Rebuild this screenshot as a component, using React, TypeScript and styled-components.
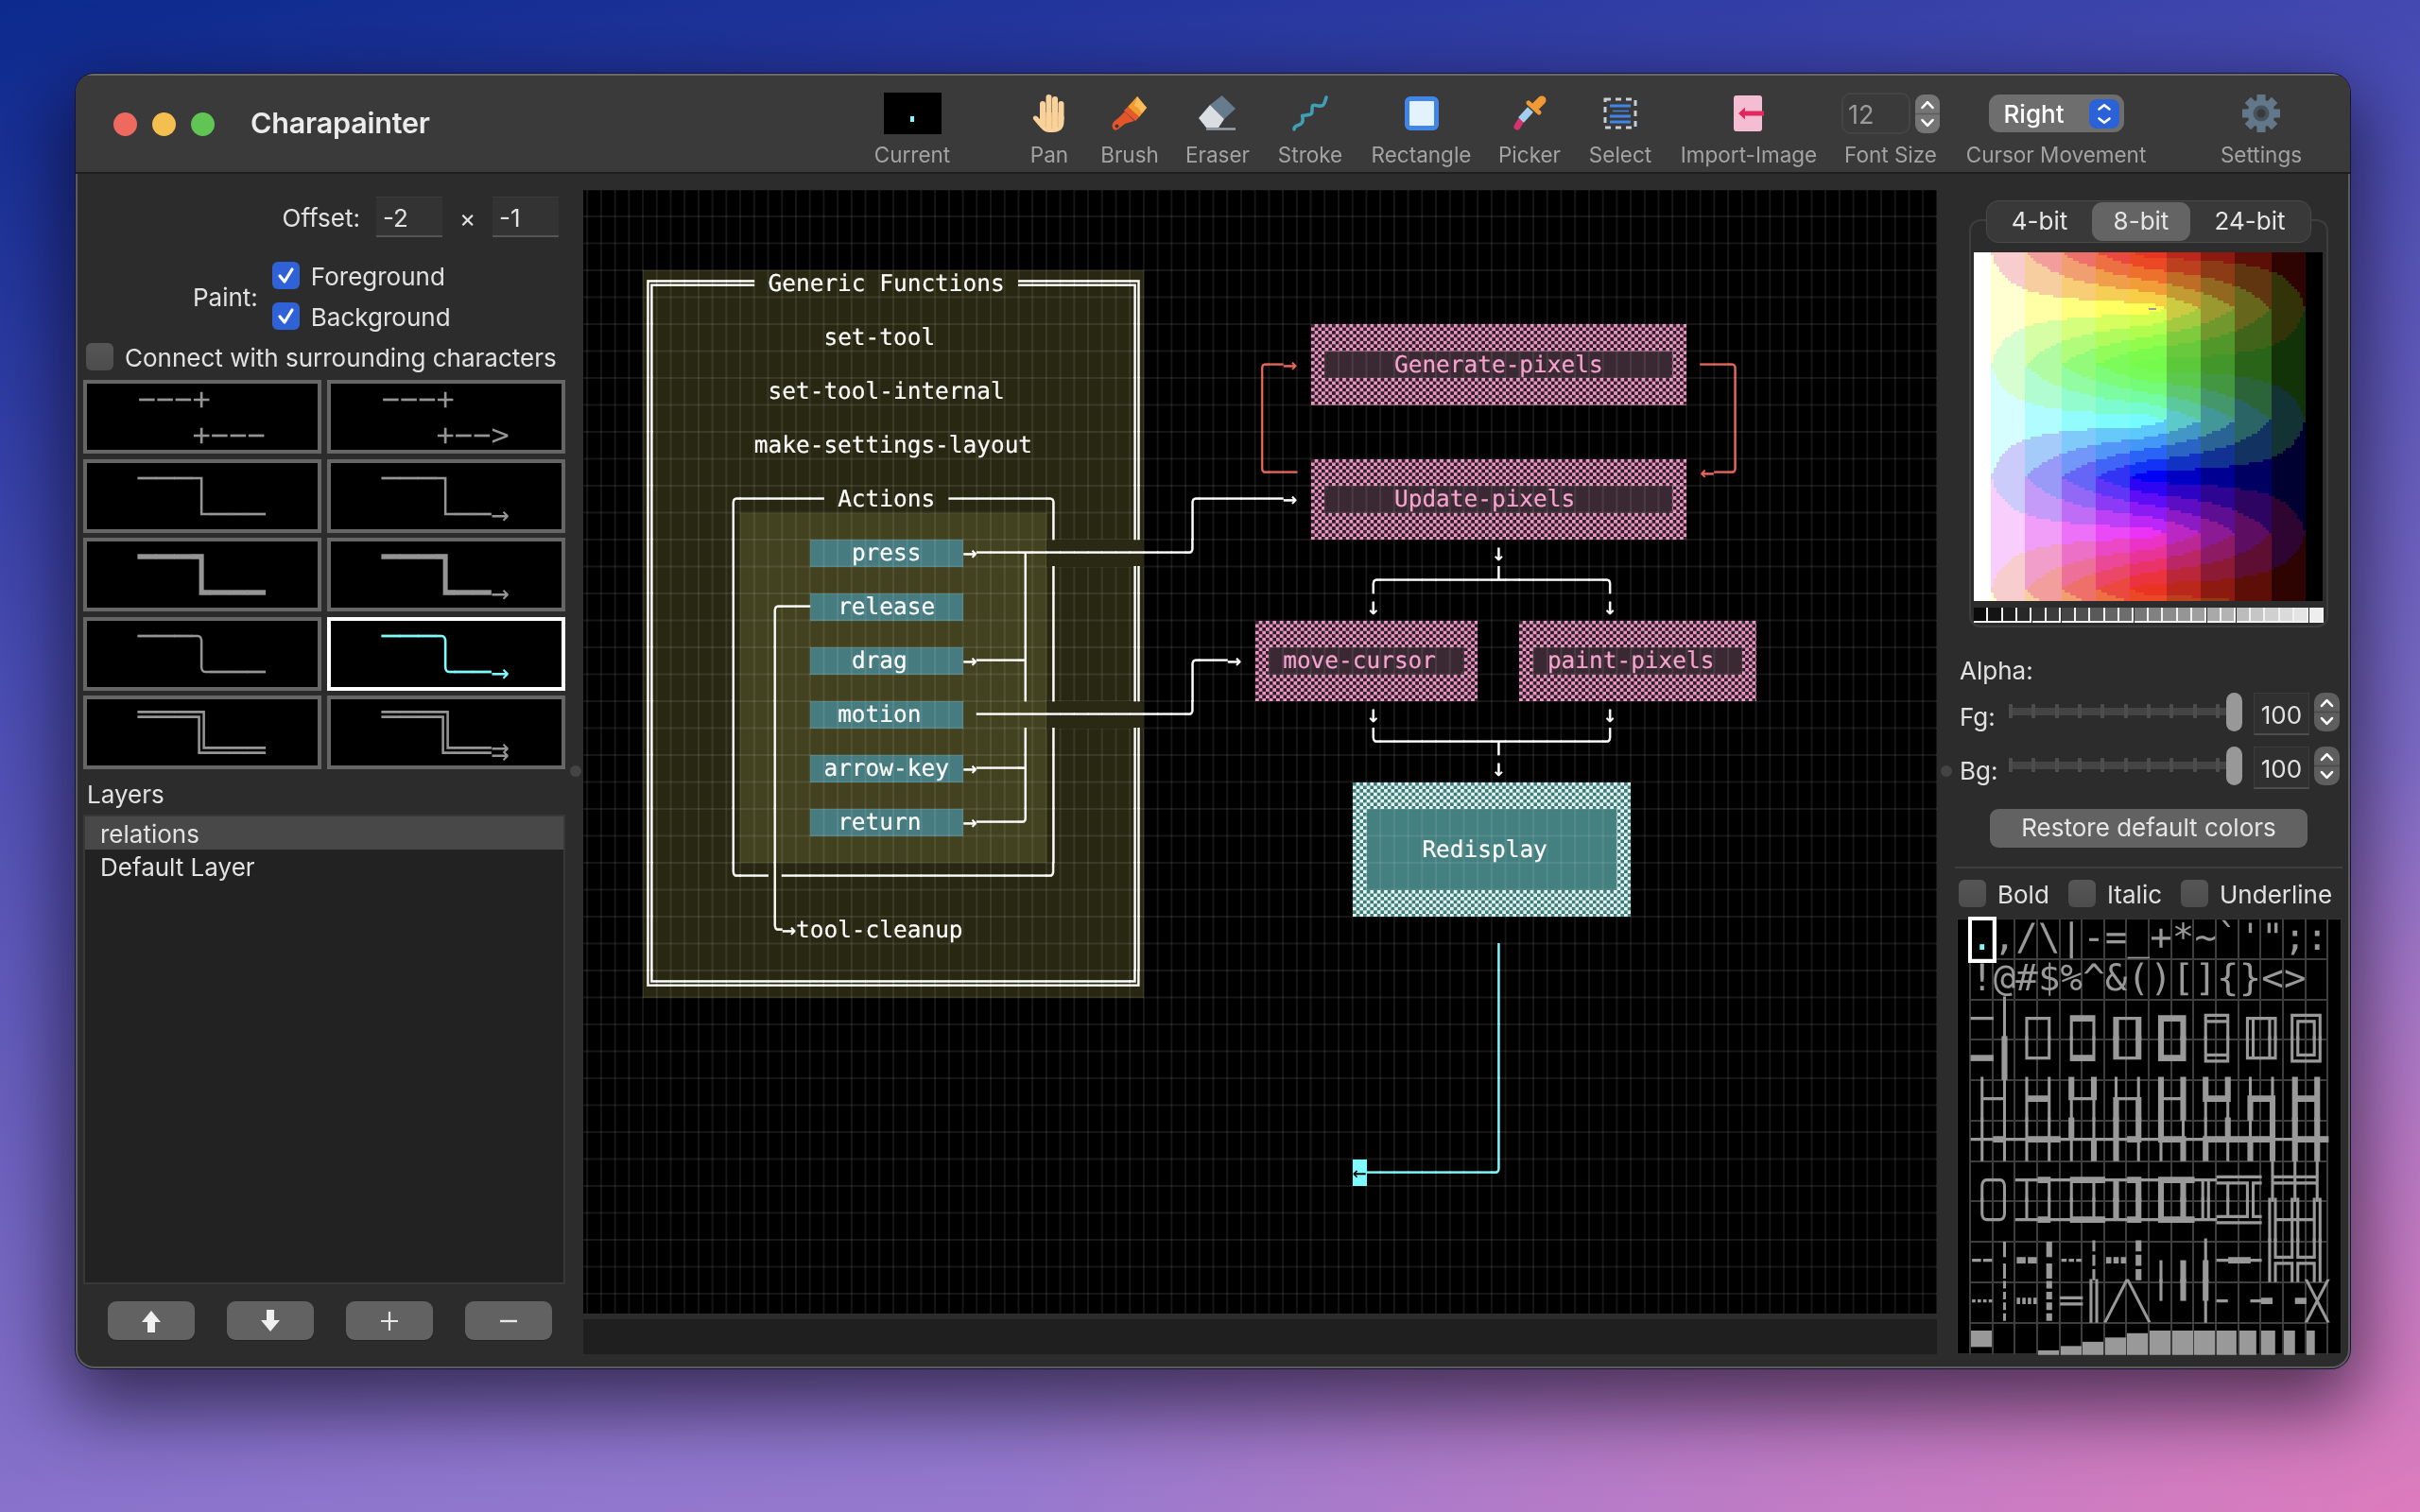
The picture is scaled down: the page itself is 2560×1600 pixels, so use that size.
import React, { useMemo } from "react";
import styled, { createGlobalStyle } from "styled-components";

const CW = 14.72;
const CH = 28.5;
const OX = 4.2;
const OY = -0.5;
const SANS = `"Inter", "Liberation Sans", sans-serif`;
const MONO = `"DejaVu Sans Mono", "Liberation Mono", monospace`;

const Global = createGlobalStyle`
  html, body { margin: 0; padding: 0; }
  body { width: 2560px; height: 1600px; overflow: hidden; font-family: ${SANS}; }
  * { box-sizing: border-box; }
`;

const Desktop = styled.div`
  width: 2560px;
  height: 1600px;
  padding: 78px 0 0 80px;
  background:
    radial-gradient(ellipse 1500px 800px at 100% 100%, #dc7bbd 0%, rgba(220,123,189,0) 100%),
    linear-gradient(166deg, #0c2a8e 0%, #25379f 14%, #4a4db4 32%, #6a60bf 52%, #8f76cd 76%, #a47fd0 100%);
`;

const Window = styled.div`
  width: 2406px;
  height: 1370px;
  display: flex;
  flex-direction: column;
  border-radius: 20px;
  background: #2c2c2c;
  overflow: hidden;
  will-change: transform;
  box-shadow: 0 0 0 1px #15153a, inset 0 0 0 2px #5c5c5c, 0 30px 80px 12px rgba(8, 4, 20, 0.62);
`;

const Header = styled.header`
  height: 106px;
  flex: none;
  display: flex;
  align-items: center;
  background: #3a3a3a;
  border-top: 2px solid #6a6a6a;
  border-bottom: 2px solid #1e1e1e;
  padding-left: 40px;
`;

const Light = styled.span<{ $c: string }>`
  width: 25px;
  height: 25px;
  border-radius: 50%;
  background: ${(p) => p.$c};
  margin-right: 16px;
  flex: none;
`;

const Title = styled.h1`
  margin: 0 0 3px 22px;
  font: 600 30.5px ${SANS};
  color: #ececec;
  letter-spacing: -0.2px;
`;

const Toolbar = styled.div`
  margin-left: auto;
  display: flex;
  gap: 30px;
  padding-right: 50px;
  align-self: flex-start;
  padding-top: 18px;
`;

const ToolItem = styled.div<{ $w: number; $ml?: number }>`
  width: ${(p) => p.$w}px;
  margin-left: ${(p) => p.$ml ?? 0}px;
  display: flex;
  flex-direction: column;
  align-items: center;
`;

const ToolIcon = styled.div`
  height: 44px;
  display: flex;
  align-items: center;
  justify-content: center;
  position: relative;
`;

const ToolLabel = styled.span`
  margin-top: 8px;
  font: 400 22.5px/28px ${SANS};
  color: #a3a3a3;
  white-space: nowrap;
`;

const CurrentSwatch = styled.div`
  width: 61px;
  height: 44px;
  background: #000;
  display: flex;
  align-items: center;
  justify-content: center;
  &::after {
    content: "";
    width: 4px;
    height: 6px;
    background: #7ffbff;
    margin-top: 12px;
  }
`;

const FontBox = styled.div`
  width: 73px;
  height: 44px;
  border: 2px solid #444;
  border-radius: 10px;
  font: 400 27px/43px ${SANS};
  color: #9a9a9a;
  padding-left: 5px;
`;

const FontField = styled.div`
  display: flex;
  align-items: center;
  gap: 5px;
`;

const Stepper = styled.div<{ $h: number; $w: number; $bg: string; $r: number }>`
  width: ${(p) => p.$w}px;
  height: ${(p) => p.$h}px;
  background: ${(p) => p.$bg};
  border-radius: ${(p) => p.$r}px;
  flex: none;
  svg { display: block; }
`;

const Popup = styled.div`
  width: 143px;
  height: 40px;
  border-radius: 11px;
  background: #6e6e6e;
  display: flex;
  align-items: center;
  justify-content: space-between;
  padding: 0 5px 0 16px;
  font: 500 26px ${SANS};
  color: #fff;
`;

const PopupBtn = styled.div`
  width: 32px;
  height: 31px;
  background: #2c62d8;
  border-radius: 8px;
  svg { display: block; }
`;

const Body = styled.div`
  flex: 1;
  display: flex;
  min-height: 0;
`;

/* ---------- left ---------- */
const LeftPanel = styled.aside`
  width: 537px;
  flex: none;
  padding-left: 8px;
  position: relative;
  display: flex;
  flex-direction: column;
`;

const SplitDot = styled.span<{ $left: number }>`
  position: absolute;
  left: ${(p) => p.$left}px;
  top: 626px;
  width: 12px;
  height: 12px;
  border-radius: 50%;
  background: #444;
`;

const BodyText = styled.span`
  font: 400 26px/30px ${SANS};
  padding-top: 3px;
  color: #e2e2e2;
  white-space: nowrap;
`;

const OffsetRow = styled.div`
  margin-top: 24px;
  width: 503px;
  display: flex;
  justify-content: flex-end;
  align-items: center;
  height: 43px;
`;

const NumField = styled.div<{ $w: number; $h: number }>`
  width: ${(p) => p.$w}px;
  height: ${(p) => p.$h}px;
  background: #333;
  border-bottom: 2px solid #555;
  border-top: 1px solid #3c3c3c;
  font: 400 26px/${(p) => p.$h}px ${SANS};
  color: #e2e2e2;
  padding-left: 7px;
  flex: none;
`;

const Times = styled(BodyText)`
  width: 53px;
  text-align: center;
`;

const OffsetLabel = styled(BodyText)`
  margin-right: 17px;
`;

const PaintRow = styled.div`
  margin: 26px 0 0 116px;
  display: flex;
  align-items: center;
  gap: 15px;
  height: 72px;
`;

const Stack = styled.div`
  display: flex;
  flex-direction: column;
  gap: 14px;
`;

const CheckRow = styled.label<{ $ml?: number }>`
  display: flex;
  align-items: center;
  gap: 12px;
  height: 29px;
  margin-left: ${(p) => p.$ml ?? 0}px;
`;

const Box = styled.span<{ $on?: boolean }>`
  width: 29px;
  height: 29px;
  border-radius: 6px;
  flex: none;
  background: ${(p) => (p.$on ? "#2f62d6" : "linear-gradient(#565656, #4c4c4c)")};
  display: flex;
  align-items: center;
  justify-content: center;
`;

const ConnectRow = styled(CheckRow)`
  margin-top: 14px;
`;

const PreviewGrid = styled.div`
  margin-top: 10px;
  display: grid;
  grid-template-columns: 252px 252px;
  grid-auto-rows: 78px;
  column-gap: 6px;
  row-gap: 5.5px;
`;

const Preview = styled.div<{ $sel?: boolean }>`
  background: #000;
  border: 4px solid ${(p) => (p.$sel ? "#fff" : "#666")};
  overflow: hidden;
`;

const PreviewText = styled.pre<{ $sel?: boolean }>`
  margin: -3px 0 0 -4px;
  font: 400 32px/38px ${MONO};
  text-rendering: geometricPrecision;
  color: ${(p) => (p.$sel ? "#7ffbff" : "#959595")};
`;

const LayersTitle = styled(BodyText)`
  margin: 10px 0 0 4px;
  padding-top: 2px;
  line-height: 30px;
`;

const LayerList = styled.div`
  margin-top: 6px;
  width: 510px;
  height: 497px;
  background: #222;
  border: 2px solid #383838;
  flex: none;
`;

const LayerRow = styled.div<{ $sel?: boolean }>`
  height: ${(p) => (p.$sel ? 35 : 34)}px;
  background: ${(p) => (p.$sel ? "#484848" : "transparent")};
  font: 400 26px/37px ${SANS};
  color: #e2e2e2;
  padding-left: 16px;
`;

const LayerButtons = styled.div`
  margin: 18px 0 0 26px;
  display: flex;
  gap: 34.5px;
`;

const SmallBtn = styled.div`
  width: 91.5px;
  height: 41px;
  border-radius: 9px;
  background: #626262;
  display: flex;
  align-items: center;
  justify-content: center;
  box-shadow: 0 1px 0 #222;
  svg { display: block; }
`;

/* ---------- canvas ---------- */
const CanvasCol = styled.main`
  width: 1432px;
  flex: none;
  padding-top: 17px;
  display: flex;
  flex-direction: column;
  gap: 6px;
`;

const Canvas = styled.div`
  height: 1189px;
  background: #000;
  position: relative;
  overflow: hidden;
`;

const ScrollBar = styled.div`
  height: 37px;
  background: #1f1f1f;
`;

type CellProps = { $c: number; $r: number; $w: number; $h: number };

const Cell = styled.div<CellProps>`
  position: absolute;
  left: ${(p) => OX + p.$c * CW}px;
  top: ${(p) => OY + p.$r * CH}px;
  width: ${(p) => p.$w * CW}px;
  height: ${(p) => p.$h * CH}px;
`;

const Fill = styled(Cell)<{ $bg: string }>`
  background: ${(p) => p.$bg};
`;

const Patch = styled(Fill)`
  z-index: 3;
`;

const Dither = styled(Cell)<{ $fg: string; $base: string }>`
  background-color: ${(p) => p.$base};
  background-image: repeating-conic-gradient(${(p) => p.$fg} 0 25%, ${(p) => p.$base} 0 50%);
  background-size: 7.36px 7.125px;
`;

const GridLines = styled.div`
  position: absolute;
  inset: 0;
  z-index: 2;
  background-image:
    linear-gradient(to right, rgba(255,255,255,0.085) 2px, transparent 2px),
    linear-gradient(to bottom, rgba(255,255,255,0.085) 2px, transparent 2px);
  background-size: ${CW}px ${CH}px;
  background-position: ${OX - 1}px ${OY - 1}px;
`;

const NodeLabel = styled.span<{ $c: number; $r: number; $color?: string }>`
  position: absolute;
  z-index: 4;
  left: ${(p) => OX + p.$c * CW}px;
  top: ${(p) => OY + p.$r * CH}px;
  font: 400 24.45px/${CH}px ${MONO};
  text-rendering: geometricPrecision;
  color: ${(p) => p.$color ?? "#fff"};
  white-space: pre;
  -webkit-text-stroke: 0.2px currentColor;
`;

const InkRun = styled(NodeLabel)`
  -webkit-text-stroke: 0.4px currentColor;
`;

const CursorCell = styled(Cell)`
  z-index: 5;
  background: #7ffbff;
  color: #000;
  font: 400 24.45px/${CH}px ${MONO};
  text-rendering: geometricPrecision;
`;

/* ---------- right ---------- */
const RightPanel = styled.aside`
  width: 437px;
  flex: none;
  padding-top: 28px;
  position: relative;
  display: flex;
  flex-direction: column;
`;

const Tabs = styled.div`
  margin-left: 52px;
  width: 344px;
  height: 45px;
  flex: none;
  border: 1.5px solid #4a4a4a;
  border-radius: 13px;
  background: #393939;
  display: flex;
  position: relative;
  z-index: 1;
`;

const Tab = styled.div<{ $w: number; $on?: boolean }>`
  width: ${(p) => p.$w}px;
  margin: 1px 0;
  border-radius: 11px;
  background: ${(p) => (p.$on ? "#646464" : "transparent")};
  font: 400 26px/40px ${SANS};
  color: #e6e6e6;
  text-align: center;
`;

const ColorGroup = styled.div`
  margin: -25px 0 0 34px;
  width: 380px;
  height: 432px;
  flex: none;
  border: 2px solid #3e3e3e;
  border-radius: 12px;
  padding: 33px 3px 0;
`;

const PickerSvg = styled.svg`
  display: block;
  width: 369px;
  height: 369px;
`;

const GrayStrip = styled.div`
  margin-top: 7px;
  display: flex;
  gap: 0.3px;
  height: 15.5px;
`;

const GrayCell = styled.span<{ $v: number }>`
  flex: 1;
  background: ${(p) => `rgb(${p.$v},${p.$v},${p.$v})`};
  border-right: 2px solid #f2f2f2;
  border-bottom: 2px solid #f2f2f2;
`;

const AlphaLabel = styled(BodyText)`
  margin: 31px 0 0 24px;
  padding-top: 0;
`;

const AlphaRow = styled.div<{ $mt: number }>`
  margin: ${(p) => p.$mt}px 0 0 24px;
  display: flex;
  height: 46px;
  flex: none;
`;

const AlphaName = styled(BodyText)`
  width: 52px;
  padding-top: 11px;
`;

const Slider = styled.div`
  width: 247px;
  height: 41px;
  position: relative;
  margin-right: 12px;
  flex: none;
`;

const Track = styled.div`
  position: absolute;
  left: 0;
  right: 12px;
  top: 16px;
  height: 8px;
  background: #444;
  display: flex;
  justify-content: space-between;
  padding-right: 12px;
`;

const Tick = styled.span`
  width: 4px;
  height: 15px;
  margin-top: -4px;
  background: #4d4d4d;
  border-radius: 1px;
`;

const Thumb = styled.span`
  position: absolute;
  right: 0;
  top: 0;
  width: 17px;
  height: 41px;
  border-radius: 9px;
  background: #989898;
`;

const AlphaField = styled(NumField)`
  text-align: center;
  padding: 0;
  background: #303030;
  border: 1px solid #3c3c3c;
  border-bottom: 2px solid #4e4e4e;
  margin-right: 5px;
`;

const RestoreBtn = styled.div`
  margin: 20px 0 0 56px;
  width: 336px;
  height: 41px;
  border-radius: 9px;
  background: #626262;
  font: 400 26px/39px ${SANS};
  color: #e6e6e6;
  text-align: center;
  flex: none;
`;

const Divider = styled.hr`
  margin: 20px 0 0 19px;
  width: 410px;
  height: 2px;
  border: 0;
  background: #3f3f3f;
  flex: none;
`;

const StyleRow = styled.div`
  margin: 12px 0 0 23px;
  display: flex;
  height: 29px;
  flex: none;
`;

const StyleCheck = styled(CheckRow)<{ $w: number }>`
  width: ${(p) => p.$w}px;
`;

const CharSet = styled.div`
  margin: 12px 0 0 21px;
  width: 407px;
  height: 460px;
  flex: none;
  background: #000;
  padding-left: 14px;
  border: 1px solid #333;
  border-bottom: 0;
`;

const CharRow = styled.div<{ $h: number }>`
  display: flex;
  height: ${(p) => p.$h}px;
  width: 378.4px;
  box-shadow: -2px 0 0 #3e3e3e;
`;

const CharCell = styled.span<{ $sel?: boolean; $last?: boolean }>`
  width: 23.65px;
  height: 100%;
  flex: none;
  position: relative;
  border-right: 2px solid #3e3e3e;
  border-bottom: ${(p) => (p.$last ? "0" : "2px solid #3e3e3e")};
  color: ${(p) => (p.$sel ? "#7ffbff" : "#999")};
  ${(p) => (p.$sel ? "outline: 4px solid #fff; outline-offset: -1px; z-index: 2;" : "")}
`;

const CharGlyph = styled.span`
  position: absolute;
  left: 0;
  top: 0;
  font: 400 39px/40px ${MONO};
  text-rendering: geometricPrecision;
  white-space: pre;
`;

const BlockClip = styled.span`
  position: absolute;
  left: 0;
  top: 7px;
  width: 22px;
  height: 26px;
  overflow: hidden;
`;

const BlockGlyph = styled.span<{ $top: boolean }>`
  display: block;
  margin-top: ${(p) => (p.$top ? 0 : -10)}px;
  font: 400 31px/36px ${MONO};
  text-rendering: geometricPrecision;
  white-space: pre;
  transform: scaleX(1.26);
  transform-origin: left center;
`;

/* ---------- data ---------- */
const ROWS = 42;
const COLS = 96;
type Ink = string[][];
const blank = (): Ink => Array.from({ length: ROWS }, () => Array(COLS).fill(" "));
const put = (g: Ink, c: number, r: number, ch: string) => { g[r][c] = ch; };
const hline = (g: Ink, c1: number, c2: number, r: number, ch = "─") => { for (let c = c1; c <= c2; c++) g[r][c] = ch; };
const vline = (g: Ink, c: number, r1: number, r2: number, ch = "│", skip: number[] = []) => {
  for (let r = r1; r <= r2; r++) if (!skip.includes(r)) g[r][c] = ch;
};

type Run = { c: number; r: number; t: string };
const runs = (g: Ink): Run[] => {
  const out: Run[] = [];
  g.forEach((row, r) => {
    const s = row.join("");
    for (const m of s.matchAll(/\S+/g)) out.push({ c: m.index ?? 0, r, t: m[0] });
  });
  return out;
};

const whiteInk = () => {
  const g = blank();
  // double frame
  put(g, 4, 3, "╔"); hline(g, 5, 11, 3, "═"); hline(g, 31, 38, 3, "═"); put(g, 39, 3, "╗");
  vline(g, 4, 4, 28, "║"); vline(g, 39, 4, 28, "║", [13, 19]);
  put(g, 4, 29, "╚"); hline(g, 5, 38, 29, "═"); put(g, 39, 29, "╝");
  // actions frame
  put(g, 10, 11, "╭"); hline(g, 11, 16, 11); hline(g, 26, 32, 11); put(g, 33, 11, "╮");
  vline(g, 10, 12, 24); vline(g, 33, 12, 24, "│", [13, 19]);
  put(g, 10, 25, "╰"); hline(g, 11, 12, 25); hline(g, 14, 32, 25); put(g, 33, 25, "╯");
  // release -> cleanup
  put(g, 13, 15, "╭"); hline(g, 14, 15, 15); vline(g, 13, 16, 26);
  put(g, 13, 27, "╰"); put(g, 14, 27, "→");
  // press
  put(g, 27, 13, "→"); hline(g, 28, 42, 13); put(g, 31, 13, "┬"); put(g, 43, 13, "╯");
  put(g, 43, 12, "│"); put(g, 43, 11, "╭"); hline(g, 44, 49, 11); put(g, 50, 11, "→");
  // action bus
  vline(g, 31, 14, 22, "│", [19]);
  put(g, 27, 17, "→"); hline(g, 28, 30, 17); put(g, 31, 17, "┤");
  put(g, 27, 21, "→"); hline(g, 28, 30, 21); put(g, 31, 21, "┤");
  put(g, 27, 23, "→"); hline(g, 28, 30, 23); put(g, 31, 23, "╯");
  // motion
  hline(g, 28, 42, 19); put(g, 43, 19, "╯"); put(g, 43, 18, "│");
  put(g, 43, 17, "╭"); hline(g, 44, 45, 17); put(g, 46, 17, "→");
  // tree
  put(g, 65, 13, "↓");
  put(g, 56, 14, "╭"); hline(g, 57, 72, 14); put(g, 65, 14, "┴"); put(g, 73, 14, "╮");
  put(g, 56, 15, "↓"); put(g, 73, 15, "↓");
  put(g, 56, 19, "↓"); put(g, 73, 19, "↓");
  put(g, 56, 20, "╰"); hline(g, 57, 72, 20); put(g, 65, 20, "┬"); put(g, 73, 20, "╯");
  put(g, 65, 21, "↓");
  return runs(g);
};

const redInk = () => {
  const g = blank();
  put(g, 48, 6, "╭"); put(g, 49, 6, "─"); put(g, 50, 6, "→");
  vline(g, 48, 7, 9);
  put(g, 48, 10, "╰"); hline(g, 49, 50, 10);
  hline(g, 80, 81, 6); put(g, 82, 6, "╮"); vline(g, 82, 7, 9);
  put(g, 82, 10, "╯"); put(g, 81, 10, "─"); put(g, 80, 10, "←");
  return runs(g);
};

const cyanInk = () => {
  const g = blank();
  vline(g, 65, 28, 35); put(g, 65, 36, "╯"); hline(g, 56, 64, 36);
  return runs(g);
};

const PINK = "#ec93c1";
const PINK_BASE = "#2a1c25";
const PINK_BAND = "#3a2932";

const purple = [
  { c: 52, r: 5, w: 27, label: "Generate-pixels", lc: 58 },
  { c: 52, r: 10, w: 27, label: "Update-pixels", lc: 58 },
  { c: 48, r: 16, w: 16, label: "move-cursor", lc: 50 },
  { c: 67, r: 16, w: 17, label: "paint-pixels", lc: 69 },
];

const teal = [
  { r: 13, label: "press", c: 19 },
  { r: 15, label: "release", c: 18 },
  { r: 17, label: "drag", c: 19 },
  { r: 19, label: "motion", c: 18 },
  { r: 21, label: "arrow-key", c: 17 },
  { r: 23, label: "return", c: 18 },
];

const plainLabels = [
  { c: 13, r: 3, t: "Generic Functions" },
  { c: 17, r: 5, t: "set-tool" },
  { c: 13, r: 7, t: "set-tool-internal" },
  { c: 12, r: 9, t: "make-settings-layout" },
  { c: 18, r: 11, t: "Actions" },
  { c: 15, r: 27, t: "tool-cleanup" },
];

const previews = [
  ["   −−−+\n      +−−−", "   −−−+\n      +−−>"],
  ["   ───┐\n      └───", "   ───┐\n      └──→"],
  ["   ━━━┓\n      ┗━━━", "   ━━━┓\n      ┗━━→"],
  ["   ───╮\n      ╰───", "   ───╮\n      ╰──→"],
  ["   ═══╗\n      ╚═══", "   ═══╗\n      ╚══⇉"],
];

const charset = [
  ".,/\\|-=_+*~`'\";:",
  "!@#$%^&()[]{}<> ",
  "─│┌┐┍┑┎┒┏┓╒╕╓╖╔╗",
  "━┃└┘┕┙┖┚┗┛╘╛╙╜╚╝",
  "├┤┝┥┞┦┟┧┠┨┡┩┢┪┣┫",
  "┼┽┾┿╀╁╂╃╄╅╆╇╈╉╊╋",
  "╭╮┬┭┮┯┰┱┲┳╥╤╦╞╪╡",
  "╰╯┴┵┶┷┸┹┺┻╨╧╩╟╫╢",
  "╌╎╍╏┄┆┅┇╷╻╽╼╾╠╬╣",
  "┈┊┉┋═║╱╲╵╹╿╴╶╸╺╳",
];
const blockRow = "▀  ▁▂▃▄▅▆▇█▉▊▋▌▍";

/* ---------- colour picker ---------- */
const toLin = (v: number) => (v <= 0.04045 ? v / 12.92 : Math.pow((v + 0.055) / 1.055, 2.4));
const toGam = (v: number) => (v <= 0.0031308 ? v * 12.92 : 1.055 * Math.pow(v, 1 / 2.4) - 0.055);

const displayColor = (r: number, g: number, b: number) => {
  const R = toLin(r / 255), G = toLin(g / 255), B = toLin(b / 255);
  const o = [
    0.8225 * R + 0.1774 * G,
    0.0332 * R + 0.9669 * G,
    0.0171 * R + 0.0724 * G + 0.9108 * B,
  ].map((v) => Math.round(toGam(Math.min(1, v)) * 255));
  return `rgb(${o[0]},${o[1]},${o[2]})`;
};

const pickerColor = (hue: number, l: number) => {
  const c = 1 - Math.abs(2 * l - 1);
  const h6 = hue * 6;
  const x = c * (1 - Math.abs((h6 % 2) - 1));
  const m = l - c / 2;
  const tbl = [[c, x, 0], [x, c, 0], [0, c, x], [0, x, c], [x, 0, c], [c, 0, x]];
  const t = tbl[Math.floor(h6) % 6];
  const q = t.map((v) => Math.round(Math.min(1, Math.max(0, v + m)) * 5) * 51);
  return displayColor(q[0], q[1], q[2]);
};

const Picker: React.FC = () => {
  const rects = useMemo(() => {
    const out: { x: number; y: number; h: number; f: string }[] = [];
    const N = 123;
    for (let i = 0; i < N; i++) {
      const l = 1 - (i + 0.5) / N;
      let start = 0;
      let cur = "";
      for (let j = 0; j <= N; j++) {
        const col = j < N ? pickerColor((((j + 0.5) / N) * 1.035) % 1, l) : "";
        if (col !== cur) {
          if (cur) out.push({ x: i * 3, y: start * 3, h: (j - start) * 3, f: cur });
          cur = col;
          start = j;
        }
      }
    }
    return out;
  }, []);
  return (
    <PickerSvg viewBox="0 0 369 369" shapeRendering="crispEdges">
      {rects.map((r, i) => (
        <rect key={i} x={r.x} y={r.y} width={3} height={r.h} fill={r.f} />
      ))}
      <rect x={185} y={59} width={8} height={2} fill="#9a9a9a" />
    </PickerSvg>
  );
};

/* ---------- icons ---------- */
const Chevrons: React.FC<{ w: number; h: number; split?: boolean }> = ({ w, h, split }) => (
  <svg width={w} height={h} viewBox={`0 0 ${w} ${h}`} fill="none" stroke="#fff" strokeWidth={2.6} strokeLinecap="round" strokeLinejoin="round">
    <path d={`M${w / 2 - 5.5} ${h * 0.34} L${w / 2} ${h * 0.2} L${w / 2 + 5.5} ${h * 0.34}`} />
    <path d={`M${w / 2 - 5.5} ${h * 0.66} L${w / 2} ${h * 0.8} L${w / 2 + 5.5} ${h * 0.66}`} />
    {split && <path d={`M0 ${h / 2} H${w}`} stroke="rgba(0,0,0,0.22)" strokeWidth={1.5} />}
  </svg>
);

const Hand = () => (
  <svg width="36" height="42" viewBox="0 0 36 42">
    <g fill="#f8d29b">
      <rect x="8" y="8" width="6" height="24" rx="3" />
      <rect x="14.5" y="1" width="6" height="28" rx="3" />
      <rect x="21" y="3" width="6" height="26" rx="3" />
      <rect x="27.5" y="8" width="6" height="22" rx="3" />
      <path d="M8 24H33.5V30C33.5 37 29 41 22 41H18C12 41 10 37 6 33L1 27C0 24 3 22.5 5 24L8 27Z" />
    </g>
    <path d="M14.3 20V36M20.7 20V37M27.3 20V36" stroke="#eebc7c" strokeWidth="1.2" />
  </svg>
);
const Brush = () => (
  <svg width="38" height="38" viewBox="0 0 38 38">
    <path d="M27 1L37 13L29 23L17 12Z" fill="#f29b2e" />
    <path d="M27 1L37 13L32 19L28 13L24 11Z" fill="#f7bd5a" />
    <path d="M17 12L29 23L25 27L13 16Z" fill="#e85a2c" />
    <path d="M14 17L24 27L14 30L9 34Q5 38 2 36Q-1 32 2 28L8 23Z" fill="#e4552a" />
    <circle cx="5.5" cy="32.5" r="1.9" fill="#3a3a3a" />
  </svg>
);
const Eraser = () => (
  <svg width="40" height="38" viewBox="0 0 40 38">
    <path d="M24.7 0L39 14L27 25L12 10Z" fill="#667b8c" />
    <path d="M12 10L27 25L21 34H8L0 24Z" fill="#dadee1" />
    <path d="M8 35.5H39" stroke="#98a3ac" strokeWidth="2.4" />
  </svg>
);
const Stroke = () => (
  <svg width="38" height="38" viewBox="0 0 38 38" fill="none">
    <path d="M2 36C2 29 10 34 11 27S8 22 14 21S21 21 21 15S22 10 28 11S34 8 36 2" stroke="#3f9fb5" strokeWidth="3.6" strokeLinecap="round" />
  </svg>
);
const RectIcon = () => (
  <svg width="36" height="36" viewBox="0 0 36 36">
    <rect x="2.5" y="2.5" width="31" height="31" rx="3.5" fill="#e3f2fd" stroke="#3f86e8" strokeWidth="5" />
  </svg>
);
const Dropper = () => (
  <svg width="36" height="38" viewBox="0 0 36 38" fill="none" strokeLinecap="round">
    <path d="M5 33L8 28" stroke="#d6336c" strokeWidth="7" />
    <path d="M9 26L19 15" stroke="#a5cdf0" strokeWidth="8" strokeLinecap="butt" />
    <path d="M17 8L28 18" stroke="#f09a37" strokeWidth="5" />
    <path d="M25 11L31 5" stroke="#f09a37" strokeWidth="9" />
  </svg>
);
const SelectIcon = () => (
  <svg width="36" height="34" viewBox="0 0 36 34" fill="none">
    <rect x="2" y="2" width="32" height="30" stroke="#c8ced4" strokeWidth="3" strokeDasharray="6 5" />
    <path d="M7 9H29M7 20H29M7 26H29" stroke="#3f86e8" strokeWidth="2.8" />
    <path d="M10 14.5H27" stroke="#3f86e8" strokeWidth="1.6" />
  </svg>
);
const ImportIcon = () => (
  <svg width="32" height="38" viewBox="0 0 32 38">
    <rect x="0" y="0" width="30" height="38" rx="3" fill="#f4bdd2" />
    <path d="M5 19L12 12.5V16.5H32V21.5H12V25.5Z" fill="#e0295f" />
  </svg>
);
const Gear = () => (
  <svg width="40" height="40" viewBox="-20 -20 40 40">
    {[0, 45, 90, 135, 180, 225, 270, 315].map((a) => (
      <rect key={a} x="-4.5" y="-20" width="9" height="9" transform={`rotate(${a})`} fill="#62788a" />
    ))}
    <circle r="14.5" fill="#62788a" />
    <circle r="8.5" fill="#45535f" />
    <circle r="4.5" fill="#3a3a3a" />
  </svg>
);
const Check = () => (
  <svg width="21" height="21" viewBox="0 0 21 21" fill="none">
    <path d="M4 11L9 17L17 4" stroke="#fff" strokeWidth="3.2" strokeLinecap="round" strokeLinejoin="round" />
  </svg>
);
const ArrowUp = () => (
  <svg width="20" height="24" viewBox="0 0 20 24"><path d="M10 1L20 13H14V24H6V13H0Z" fill="#f0f0f0" /></svg>
);
const ArrowDown = () => (
  <svg width="20" height="24" viewBox="0 0 20 24"><path d="M10 23L20 11H14V0H6V11H0Z" fill="#f0f0f0" /></svg>
);
const Plus = () => (
  <svg width="18" height="20" viewBox="0 0 18 20"><path d="M9 0V20M0 10H18" stroke="#e8e8e8" strokeWidth="2.2" /></svg>
);
const Minus = () => (
  <svg width="18" height="4" viewBox="0 0 18 4"><path d="M0 2H18" stroke="#e8e8e8" strokeWidth="2.4" /></svg>
);

const Lines: React.FC<{ items: Run[]; color: string }> = ({ items, color }) => (
  <>
    {items.map((u) => (
      <InkRun key={`${u.c}-${u.r}`} $c={u.c} $r={u.r} $color={color}>{u.t}</InkRun>
    ))}
  </>
);

const tools: { name: string; w: number; ml?: number; icon: React.ReactNode }[] = [
  { name: "Current", w: 80, icon: <CurrentSwatch /> },
  { name: "Pan", w: 37, ml: 56.5, icon: <Hand /> },
  { name: "Brush", w: 60, ml: 6.5, icon: <Brush /> },
  { name: "Eraser", w: 67, ml: -0.5, icon: <Eraser /> },
  { name: "Stroke", w: 68, ml: 0.5, icon: <Stroke /> },
  { name: "Rectangle", w: 105, ml: 1, icon: <RectIcon /> },
  { name: "Picker", w: 64, icon: <Dropper /> },
  { name: "Select", w: 66, ml: 1, icon: <SelectIcon /> },
  { name: "Import-Image", w: 144, ml: 1, icon: <ImportIcon /> },
  {
    name: "Font Size", w: 98, ml: -1, icon: (
      <FontField>
        <FontBox>12</FontBox>
        <Stepper $w={26} $h={41} $bg="#757575" $r={9}><Chevrons w={26} h={41} split /></Stepper>
      </FontField>
    ),
  },
  {
    name: "Cursor Movement", w: 189, ml: 1.5, icon: (
      <Popup>
        Right
        <PopupBtn><Chevrons w={32} h={31} /></PopupBtn>
      </Popup>
    ),
  },
  { name: "Settings", w: 88, ml: 48.5, icon: <Gear /> },
];

const grays = Array.from({ length: 24 }, (_, i) => Math.round(10 + (i / 23) * 228));

export default function App() {
  const white = useMemo(whiteInk, []);
  const red = useMemo(redInk, []);
  const cyan = useMemo(cyanInk, []);
  return (
    <Desktop>
      <Global />
      <Window>
        <Header>
          <Light $c="#ee6a5e" />
          <Light $c="#f5bf4f" />
          <Light $c="#61c554" />
          <Title>Charapainter</Title>
          <Toolbar>
            {tools.map((t) => (
              <ToolItem key={t.name} $w={t.w} $ml={t.ml}>
                <ToolIcon>{t.icon}</ToolIcon>
                <ToolLabel>{t.name}</ToolLabel>
              </ToolItem>
            ))}
          </Toolbar>
        </Header>
        <Body>
          <LeftPanel>
            <OffsetRow>
              <OffsetLabel>Offset:</OffsetLabel>
              <NumField $w={70} $h={43}>-2</NumField>
              <Times>×</Times>
              <NumField $w={70} $h={43}>-1</NumField>
            </OffsetRow>
            <PaintRow>
              <BodyText>Paint:</BodyText>
              <Stack>
                <CheckRow><Box $on><Check /></Box><BodyText>Foreground</BodyText></CheckRow>
                <CheckRow><Box $on><Check /></Box><BodyText>Background</BodyText></CheckRow>
              </Stack>
            </PaintRow>
            <ConnectRow $ml={3}><Box /><BodyText>Connect with surrounding characters</BodyText></ConnectRow>
            <PreviewGrid>
              {previews.flat().map((p, i) => (
                <Preview key={i} $sel={i === 7}>
                  <PreviewText $sel={i === 7}>{p}</PreviewText>
                </Preview>
              ))}
            </PreviewGrid>
            <LayersTitle>Layers</LayersTitle>
            <LayerList>
              <LayerRow $sel>relations</LayerRow>
              <LayerRow>Default Layer</LayerRow>
            </LayerList>
            <LayerButtons>
              <SmallBtn><ArrowUp /></SmallBtn>
              <SmallBtn><ArrowDown /></SmallBtn>
              <SmallBtn><Plus /></SmallBtn>
              <SmallBtn><Minus /></SmallBtn>
            </LayerButtons>
            <SplitDot $left={523} />
          </LeftPanel>
          <CanvasCol>
            <Canvas>
              <Fill $c={4} $r={3} $w={36} $h={27} $bg="#272712" />
              <Fill $c={11} $r={12} $w={22} $h={13} $bg="#424220" />
              {teal.map((t) => (
                <Fill key={t.r} $c={16} $r={t.r} $w={11} $h={1} $bg="#467c80" />
              ))}
              {purple.map((p) => (
                <React.Fragment key={p.label}>
                  <Dither $c={p.c} $r={p.r} $w={p.w} $h={3} $fg={PINK} $base={PINK_BASE} />
                  <Fill $c={p.c + 1} $r={p.r + 1} $w={p.w - 2} $h={1} $bg={PINK_BAND} />
                </React.Fragment>
              ))}
              <Dither $c={55} $r={22} $w={20} $h={5} $fg="#e4f4f2" $base="#3c7a78" />
              <Fill $c={56} $r={23} $w={18} $h={3} $bg="#44807f" />
              <GridLines />
              <Patch $c={33} $r={13} $w={7} $h={1} $bg="#2a2a14" />
              <Patch $c={33} $r={19} $w={7} $h={1} $bg="#2a2a14" />
              {plainLabels.map((l) => (
                <NodeLabel key={l.t} $c={l.c} $r={l.r}>{l.t}</NodeLabel>
              ))}
              {teal.map((t) => (
                <NodeLabel key={t.label} $c={t.c} $r={t.r}>{t.label}</NodeLabel>
              ))}
              {purple.map((p) => (
                <NodeLabel key={p.label} $c={p.lc} $r={p.r + 1} $color="#f6a3cf">{p.label}</NodeLabel>
              ))}
              <NodeLabel $c={60} $r={24}>Redisplay</NodeLabel>
              <Lines items={white} color="#ffffff" />
              <Lines items={red} color="#e8695c" />
              <Lines items={cyan} color="#7ffbff" />
              <CursorCell $c={55} $r={36} $w={1} $h={1}>←</CursorCell>
            </Canvas>
            <ScrollBar />
          </CanvasCol>
          <RightPanel>
            <Tabs>
              <Tab $w={111}>4-bit</Tab>
              <Tab $w={104} $on>8-bit</Tab>
              <Tab $w={126}>24-bit</Tab>
            </Tabs>
            <ColorGroup>
              <Picker />
              <GrayStrip>
                {grays.map((v) => <GrayCell key={v} $v={v} />)}
              </GrayStrip>
            </ColorGroup>
            <AlphaLabel>Alpha:</AlphaLabel>
            {["Fg:", "Bg:"].map((name, i) => (
              <AlphaRow key={name} $mt={i === 0 ? 8 : 11}>
                <AlphaName>{name}</AlphaName>
                <Slider>
                  <Track>{Array.from({ length: 10 }, (_, k) => <Tick key={k} />)}</Track>
                  <Thumb />
                </Slider>
                <AlphaField $w={59} $h={45}>100</AlphaField>
                <Stepper $w={27} $h={41} $bg="#5e5e5e" $r={10}><Chevrons w={27} h={41} split /></Stepper>
              </AlphaRow>
            ))}
            <RestoreBtn>Restore default colors</RestoreBtn>
            <Divider />
            <StyleRow>
              <StyleCheck $w={116}><Box /><BodyText>Bold</BodyText></StyleCheck>
              <StyleCheck $w={119}><Box /><BodyText>Italic</BodyText></StyleCheck>
              <StyleCheck $w={160}><Box /><BodyText>Underline</BodyText></StyleCheck>
            </StyleRow>
            <CharSet>
              {charset.map((row, r) => (
                <CharRow key={r} $h={42.75}>
                  {Array.from(row).map((ch, c) => (
                    <CharCell key={c} $sel={r === 0 && c === 0}>
                      <CharGlyph>{ch}</CharGlyph>
                    </CharCell>
                  ))}
                </CharRow>
              ))}
              <CharRow $h={32}>
                {Array.from(blockRow).map((ch, c) => (
                  <CharCell key={c} $last>
                    <BlockClip>
                      <BlockGlyph $top={c === 0}>{ch}</BlockGlyph>
                    </BlockClip>
                  </CharCell>
                ))}
              </CharRow>
            </CharSet>
            <SplitDot $left={4} />
          </RightPanel>
        </Body>
      </Window>
    </Desktop>
  );
}
